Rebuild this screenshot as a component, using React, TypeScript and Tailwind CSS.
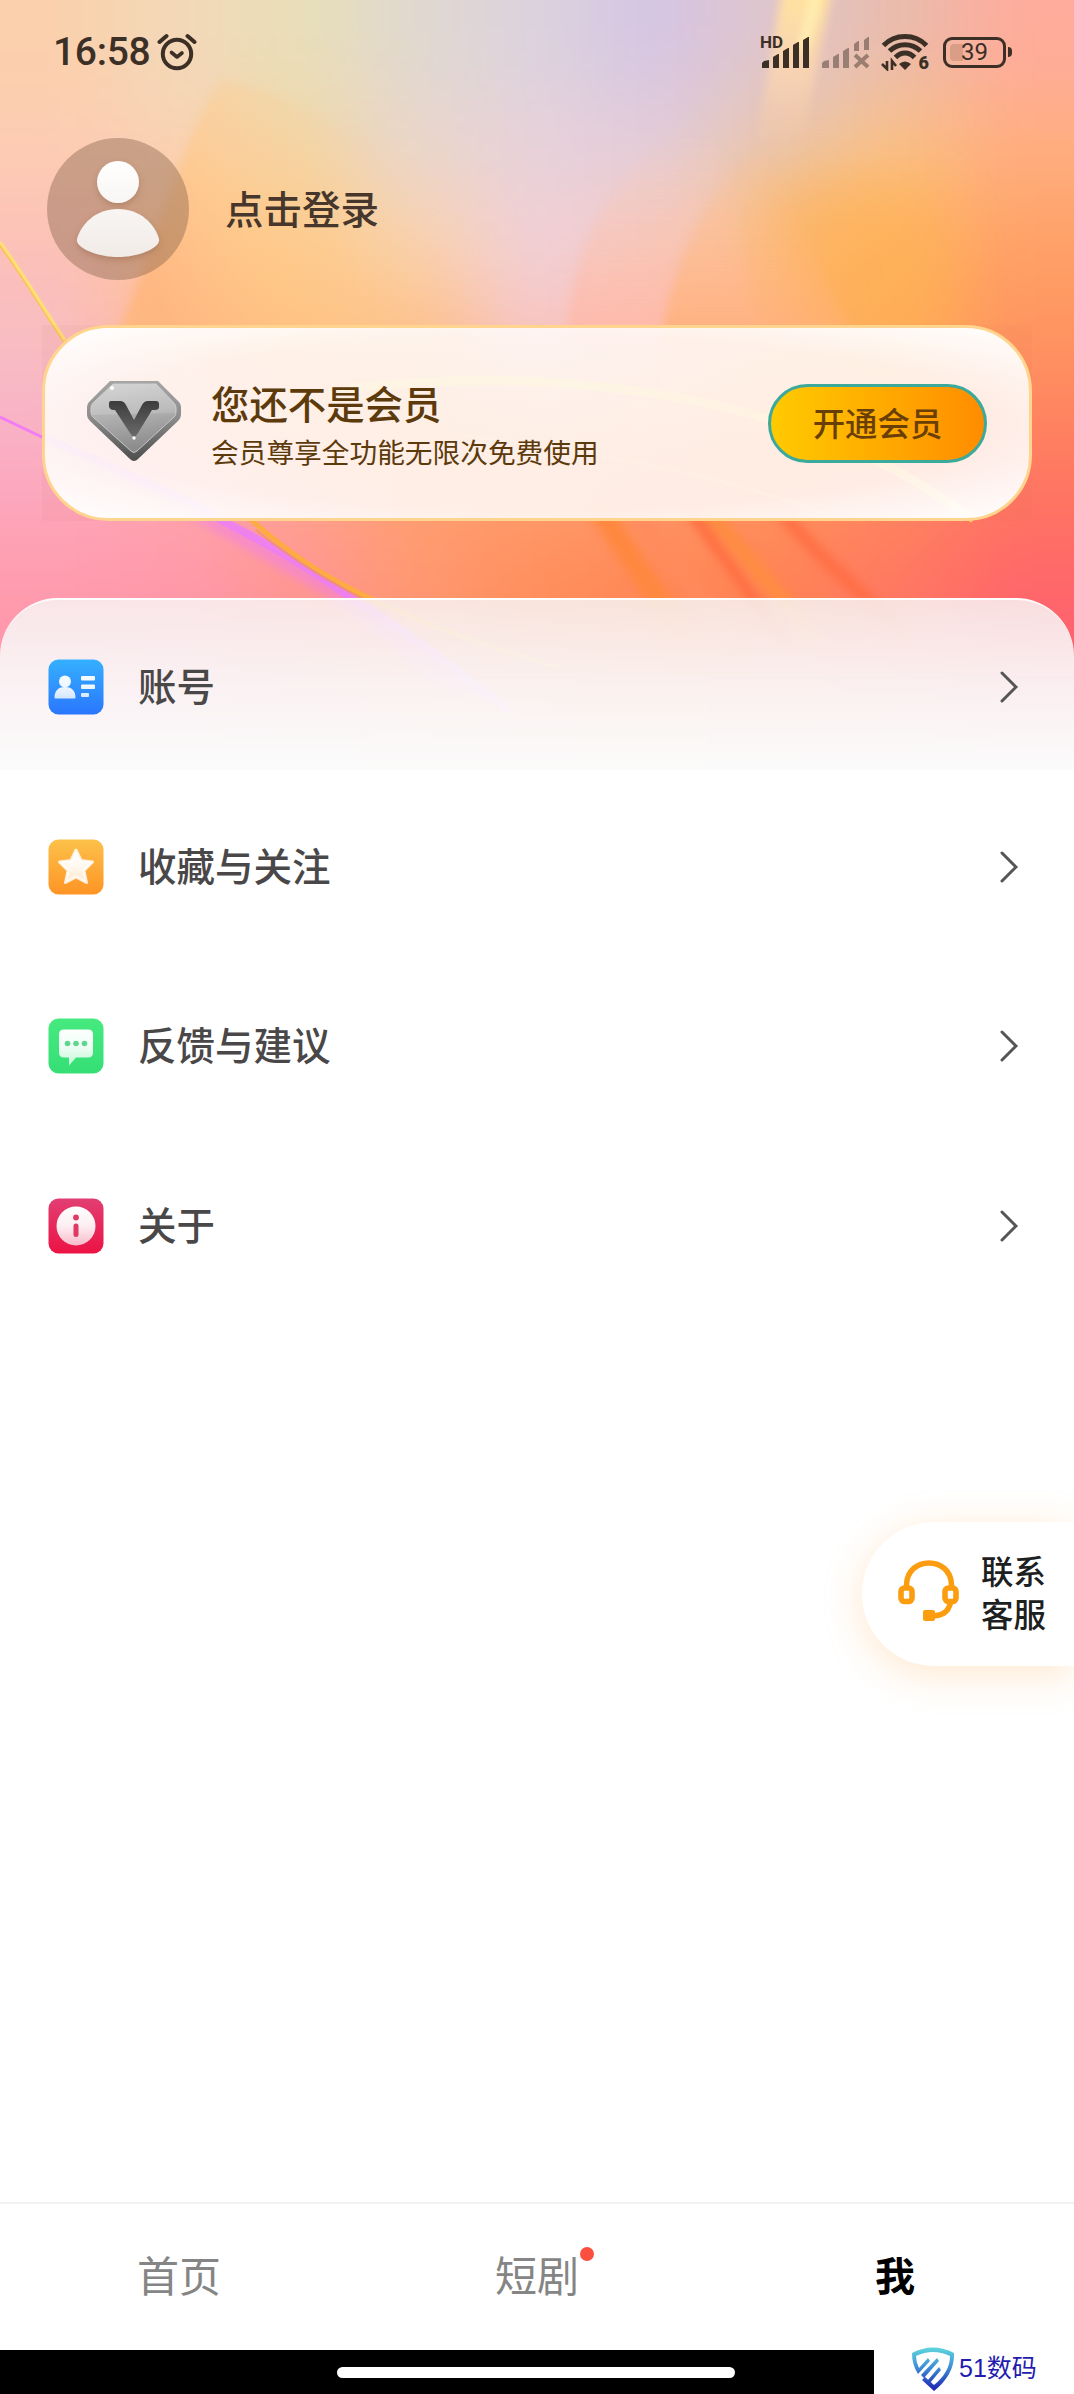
import React from 'react';

// Colours of the soft header backdrop, one entry per blurred tile
const wash = [
  ['#fbd0ac', '#f3d8b8', '#e8dfb8', '#e0d8d0', '#dcd2de', '#d5c5e3', '#e0c6cc', '#e9bcac', '#ffac9c'],
  ['#fdccb4', '#fad2b4', '#f3d6a6', '#ead6cc', '#e8d1da', '#e4cdd9', '#eac6ab', '#fbc184', '#ffae7e'],
  ['#fcc0b8', '#ffc698', '#ffcb8a', '#fbd2ac', '#f1cfd8', '#f8cabf', '#fbbc7c', '#feb45a', '#ffa066'],
  ['#f7bdc4', '#ffb690', '#ffb678', '#ffbb84', '#f8c4c4', '#ffbba0', '#ffb070', '#ffa656', '#ff9260'],
  ['#faaec6', '#ffaaa8', '#ffa888', '#ffa270', '#ffa474', '#ff9c70', '#ff9660', '#ff9060', '#ff7c60'],
  ['#ff9fb2', '#ff9cae', '#ff9a94', '#ff9a70', '#ff9260', '#ff8c5c', '#ff8858', '#ff7c60', '#ff6c66'],
  ['#ff96a8', '#ff94a4', '#ff9090', '#ff9470', '#ff8a58', '#ff8250', '#ff7c50', '#ff7464', '#ff6070'],
];

const Backdrop: React.FC = () => (
  <svg className="absolute inset-x-0 top-0" width="1074" height="770" viewBox="0 0 1074 770">
    <defs>
      <filter id="soft" x="-20%" y="-20%" width="140%" height="140%" colorInterpolationFilters="sRGB">
        <feGaussianBlur stdDeviation="44" />
      </filter>
      <filter id="blur30" x="-50%" y="-50%" width="200%" height="200%" colorInterpolationFilters="sRGB">
        <feGaussianBlur stdDeviation="30" />
      </filter>
      <filter id="blur5" x="-50%" y="-50%" width="200%" height="200%" colorInterpolationFilters="sRGB">
        <feGaussianBlur stdDeviation="5" />
      </filter>
      <linearGradient id="leftPetal" x1="150" y1="280" x2="380" y2="150" gradientUnits="userSpaceOnUse">
        <stop offset="0" stopColor="#ffb67c" stopOpacity="0.85" />
        <stop offset="0.4" stopColor="#ffc886" stopOpacity="0.6" />
        <stop offset="1" stopColor="#f8d39e" stopOpacity="0" />
      </linearGradient>
      <linearGradient id="midPetal" x1="0" y1="130" x2="0" y2="340" gradientUnits="userSpaceOnUse">
        <stop offset="0" stopColor="#f3cdb8" stopOpacity="0" />
        <stop offset="1" stopColor="#ffb8aa" stopOpacity="0.95" />
      </linearGradient>
      <linearGradient id="midPetal2" x1="0" y1="140" x2="0" y2="340" gradientUnits="userSpaceOnUse">
        <stop offset="0" stopColor="#fcc690" stopOpacity="0" />
        <stop offset="1" stopColor="#ffb07e" />
      </linearGradient>
      <linearGradient id="streak" x1="0" y1="0" x2="0" y2="150" gradientUnits="userSpaceOnUse">
        <stop offset="0" stopColor="#ffe0a0" />
        <stop offset="0.5" stopColor="#ffd8ae" stopOpacity="0.7" />
        <stop offset="1" stopColor="#ffcf9e" stopOpacity="0" />
      </linearGradient>
    </defs>

    <rect width="1074" height="770" fill="#ffb898" />
    <g filter="url(#soft)">
      {wash.map((row, r) =>
        row.map((color, c) => {
          const left = c === 0 ? -140 : c * 119.4;
          const right = c === 8 ? 1220 : (c + 1) * 119.4 + 1;
          const top = r === 0 ? -140 : r * 100;
          const bottom = r === 6 ? 900 : (r + 1) * 100 + 1;
          return <rect key={`${r}-${c}`} x={left} y={top} width={right - left} height={bottom - top} fill={color} />;
        })
      )}
    </g>

    <path d="M222 80 C185 130 165 220 112 350 L500 350 L420 200 C360 130 290 90 222 80Z" fill="url(#leftPetal)" filter="url(#blur5)" />
    <path d="M566 350 C570 240 620 150 720 110 L760 350Z" fill="url(#midPetal)" filter="url(#blur5)" />
    <path d="M660 350 C670 260 710 190 760 140 L860 350Z" fill="url(#midPetal2)" filter="url(#blur5)" />
    <path d="M770 180 C780 230 800 290 830 360 L960 360 L930 190Z" fill="#ffb055" opacity="0.6" filter="url(#blur30)" />
    <path d="M782 -10 L832 -10 L802 140 L757 140Z" fill="url(#streak)" filter="url(#blur5)" />
    <path d="M816 -10 C814 10 808 30 802 50" stroke="#fff0b0" strokeWidth="10" fill="none" filter="url(#blur5)" />

    {/* warm folds under the member card */}
    <g fill="none" filter="url(#blur5)">
      <path d="M600 510 L685 640" stroke="#ff8840" strokeWidth="22" />
      <path d="M632 510 L735 640" stroke="#ff8a5c" strokeWidth="20" opacity="0.7" />
      <path d="M690 510 L790 650" stroke="#ff6e42" strokeWidth="11" />
      <path d="M707 510 L816 640" stroke="#ff8c42" strokeWidth="16" />
      <path d="M780 510 C820 560 860 590 910 640" stroke="#ff6c42" strokeWidth="14" opacity="0.8" />
    </g>

    {/* light trails */}
    <path d="M44 438 C120 470 190 500 225 522 C280 545 330 580 362 602 C420 640 470 680 510 712 L430 680 L330 598 L200 522Z" fill="#f07cf0" opacity="0.55" filter="url(#blur5)" />
    <path d="M0 417 L44 438" fill="none" stroke="#f27cf4" strokeWidth="3" />
    <path d="M44 438 C120 470 190 500 225 522 C280 550 320 575 354 600 C420 640 470 680 510 712" fill="none" stroke="#ea7cff" strokeWidth="8" opacity="0.75" />
    <path d="M0 244 C25 278 42 308 65 342" fill="none" stroke="#fbc25a" strokeWidth="4" />
    <path d="M0 242 C25 276 42 306 65 340" fill="none" stroke="#ffdf78" strokeWidth="3" />
    <path d="M248 517 C290 555 330 580 378 602 C430 626 490 648 560 668" fill="none" stroke="#fdab42" strokeWidth="5" />
    <path d="M256 530 C290 558 330 583 372 603" fill="none" stroke="#f0943c" strokeWidth="2" opacity="0.6" />
    <path d="M350 388 C560 365 720 400 800 430 C880 455 930 490 974 519" fill="none" stroke="#ffe25a" strokeWidth="9" opacity="0.7" />
    <path d="M420 430 C600 450 740 480 840 519" fill="none" stroke="#ffc070" strokeWidth="3" opacity="0.5" />
  </svg>
);

const Bars: React.FC<{ crossed?: boolean }> = ({ crossed }) => (
  <svg width="48" height="32" viewBox="0 0 48 32" fill="currentColor">
    <path d="M0 31v-5l2-2 5-1v8zM11 31V20l5-3h1v14zM21 31V14l5-3h1v20z" />
    {crossed ? (
      <>
        <path d="M32 14V7l4-3h1v10zM42 13V3l4-3h1v13z" />
        <path d="M33 18 46 30M46 18 33 30" stroke="currentColor" strokeWidth="4" />
      </>
    ) : (
      <path d="M31 31V8l5-3h1v26zM41 31V3l5-3h1v31z" />
    )}
  </svg>
);

const StatusBar: React.FC = () => (
  <div className="flex h-[104px] items-center pr-[62px] pl-[53px] text-[#3b2f26]">
    <span className="font-[Roboto] text-[39px] leading-none font-medium tracking-[-0.3px]">16:58</span>
    <svg className="ml-[7px]" width="40" height="38" viewBox="0 0 40 38" fill="none" stroke="currentColor" strokeLinecap="round">
      <circle cx="20" cy="21" r="14.2" strokeWidth="4" />
      <path d="M14.500 19.500 20 24l5-4" strokeWidth="3.600" strokeLinejoin="round" />
      <path d="M2.500 9 9.500 3M37.500 9 30.500 3" strokeWidth="4" />
    </svg>
    <div className="ml-auto flex items-center">
      <div className="relative mt-[2px]">
        <span className="absolute -top-[3px] -left-[2px] font-[Roboto] text-[17px] leading-none font-bold">HD</span>
        <Bars />
      </div>
      <div className="mt-[2px] ml-[12px] opacity-45">
        <Bars crossed />
      </div>
      <div className="relative ml-[11px]">
        <svg width="48" height="38" viewBox="0 0 48 38" fill="none" stroke="currentColor">
          <path d="M2.500 12.500C14 .500 34 .500 45.500 12.500" strokeWidth="5" />
          <path d="M8.500 18C17 9.500 31 9.500 39.500 18" strokeWidth="5" />
          <path d="M14.500 24.500C20 18.500 28 18.500 33.500 24.500" strokeWidth="5" />
          <path d="M18 31q6-5 12 0l-6 6z" fill="currentColor" stroke="none" />
          <path d="M6 28v8l-5-5M11 37v-9l4 5" strokeWidth="2.600" />
        </svg>
        <span className="absolute right-0 -bottom-[1px] font-[Roboto] text-[18px] leading-none font-black">6</span>
      </div>
      <div className="relative ml-[14px] flex h-[31px] w-[63px] items-center justify-center rounded-[9px] border-[3px] border-current">
        <i className="absolute top-[4px] left-[4px] h-[17px] w-[13px] rounded-l bg-[#9c6b4b]/30" />
        <span className="relative font-[Roboto] text-[24px] leading-none">39</span>
      </div>
      <i className="ml-[2px] h-[10px] w-[4px] rounded-r bg-current" />
    </div>
  </div>
);

const Avatar: React.FC = () => (
  <svg width="142" height="142" viewBox="0 0 142 142">
    <defs>
      <linearGradient id="person" x1="0" y1="20" x2="0" y2="120" gradientUnits="userSpaceOnUse">
        <stop offset="0" stopColor="#fff" />
        <stop offset="1" stopColor="#f1ebe7" />
      </linearGradient>
      <filter id="personShadow" x="-20%" y="-20%" width="140%" height="140%">
        <feDropShadow dx="0" dy="3" stdDeviation="3" floodColor="#7a4a30" floodOpacity="0.3" />
      </filter>
    </defs>
    <circle cx="71" cy="71" r="71" fill="#8b6650" opacity="0.44" />
    <g fill="url(#person)" filter="url(#personShadow)">
      <circle cx="71" cy="44" r="21" />
      <path d="M71 71C93 71 108 86 112 101C114 109 93 119 71 119S28 109 30 101C34 86 49 71 71 71Z" />
    </g>
  </svg>
);

const Diamond: React.FC = () => (
  <svg className="-mt-[4px]" width="94" height="82" viewBox="0 0 94 82">
    <defs>
      <linearGradient id="rim" x1="0" y1="0" x2="0" y2="1">
        <stop offset="0" stopColor="#a5a5a5" />
        <stop offset="0.45" stopColor="#8d8d8d" />
        <stop offset="1" stopColor="#4d4d4d" />
      </linearGradient>
      <linearGradient id="face" x1="0" y1="0" x2="0.2" y2="1">
        <stop offset="0" stopColor="#d6d6d6" />
        <stop offset="0.5" stopColor="#bdbdbd" />
        <stop offset="1" stopColor="#8f8f8f" />
      </linearGradient>
      <linearGradient id="vee" x1="0" y1="0" x2="0" y2="1">
        <stop offset="0" stopColor="#3c3c3c" />
        <stop offset="1" stopColor="#6a6a6a" />
      </linearGradient>
    </defs>
    <path d="M23 1H71L92 22Q94 24 94 27V35Q94 38 91 41L51 79Q47 83 43 79L3 41Q0 38 0 35V27Q0 24 2 22Z" fill="url(#rim)" />
    <path d="M26 4H69L87 23Q89 25 89 28V32Q89 35 87 37L50 71Q47 74 44 71L6 37Q4 35 4 32V28Q4 25 6 23Z" fill="url(#face)" stroke="#cfcfcf" strokeWidth="1" />
    <path d="M4 35 89 33 87 37 50 71Q47 74 44 71L6 37Z" fill="#808080" opacity="0.2" />
    <path d="M24 21H33Q37 21 39 25L47 40L55 25Q57 21 61 21H69Q72 21 72 24V27Q72 30 68 30H65L51 53Q47 60 43 53L28 30H26Q22 29 22 26V23Q22 21 24 21Z" fill="url(#vee)" />
    <circle cx="25" cy="8" r="2" fill="#fff" />
    <circle cx="47" cy="58" r="1.700" fill="#fff" />
  </svg>
);

const MemberCard: React.FC = () => (
  <div className="mx-[42px] mt-[45px] bg-[#c66a50]/5">
    <div className="flex h-[196px] items-center rounded-[66px] border-[3px] border-[#ffd48e] bg-[radial-gradient(ellipse_at_center,rgba(255,250,246,0.87)_30%,rgba(255,250,247,0.88)_65%,rgba(255,255,255,1)_100%)] pr-[42px] pl-[42px]">
      <Diamond />
      <div className="ml-[30px] text-[#5d3a0c]">
        <div className="text-[38.400px] leading-[55px] font-medium">您还不是会员</div>
        <div className="text-[27.700px] leading-[42px]">会员尊享全功能无限次免费使用</div>
      </div>
      <button className="ml-auto h-[79px] w-[219px] rounded-full border-[3px] border-[#3ba99c] bg-gradient-to-r from-[#ffca00] to-[#ff8c00] pb-[2px] text-[32.400px] leading-none font-medium text-[#693f06]">
        开通会员
      </button>
    </div>
  </div>
);

const Tile: React.FC<{ id: string; from: string; to: string; children: React.ReactNode }> = ({ id, from, to, children }) => (
  <svg width="56" height="56" viewBox="0 0 56 56">
    <defs>
      <linearGradient id={id} x1="0" y1="0" x2="0" y2="1">
        <stop offset="0" stopColor={from} />
        <stop offset="1" stopColor={to} />
      </linearGradient>
      <linearGradient id={`${id}Glyph`} x1="0" y1="8" x2="0" y2="48" gradientUnits="userSpaceOnUse">
        <stop offset="0" stopColor="#fff" />
        <stop offset="0.5" stopColor="#fff" stopOpacity="0.92" />
        <stop offset="1" stopColor="#fff" stopOpacity="0.7" />
      </linearGradient>
    </defs>
    <rect x="0.500" y="0.500" width="55" height="55" rx="10" fill={`url(#${id})`} />
    <g fill={`url(#${id}Glyph)`}>{children}</g>
  </svg>
);

const items = [
  {
    label: '账号',
    icon: (
      <Tile id="account" from="#35b0ff" to="#2a76fd">
        <circle cx="17" cy="22.500" r="6" />
        <path d="M6.500 38.500C6.500 31 11 28 17 28S27.500 31 27.500 38.500Q27.500 39.500 26.500 39.500H7.500Q6.500 39.500 6.500 38.500Z" />
        <rect x="33" y="17" width="14" height="4.500" rx="1" />
        <rect x="33" y="25.500" width="14" height="4.500" rx="1" />
        <rect x="33" y="34" width="8" height="4" rx="1" />
      </Tile>
    ),
  },
  {
    label: '收藏与关注',
    icon: (
      <Tile id="favorite" from="#fcc14a" to="#fe9425">
        <path
          d="M28 11 33 21.500 44.500 23 36 31.500 38.500 43.500 28 38 17.500 43.500 20 31.500 11.500 23 23 21.500Z"
          stroke="#fff"
          strokeOpacity="0.800"
          strokeWidth="3"
          strokeLinejoin="round"
        />
      </Tile>
    ),
  },
  {
    label: '反馈与建议',
    icon: (
      <Tile id="feedback" from="#46ea7f" to="#35df76">
        <path d="M16 11.500H40Q45 11.500 45 16.500V34.500Q45 39.500 40 39.500H28L21 47.500V39.500H16Q11 39.500 11 34.500V16.500Q11 11.500 16 11.500Z" />
        <g fill="#5fd68f">
          <circle cx="19.500" cy="25.500" r="2.800" />
          <circle cx="28" cy="25.500" r="2.800" />
          <circle cx="36.500" cy="25.500" r="2.800" />
        </g>
      </Tile>
    ),
  },
  {
    label: '关于',
    icon: (
      <Tile id="about" from="#e23e73" to="#ec1344">
        <circle cx="28" cy="28" r="19.500" />
        <g fill="#e03a64">
          <circle cx="28" cy="19.500" r="2.900" />
          <rect x="25.500" y="25.500" width="5" height="13.500" rx="2.500" />
        </g>
      </Tile>
    ),
  },
];

const Menu: React.FC = () => (
  <div className="mt-[77px] flex-1 rounded-t-[58px] border-t-2 border-white/80 bg-[linear-gradient(180deg,rgba(248,243,243,0.85)_0,rgba(250,247,248,0.94)_85px,rgba(251,251,251,1)_169px,#fff_170px)]">
    <div className="-mt-[3px]">
      {items.map((item) => (
        <div key={item.label} className="flex h-[179.700px] items-center pr-[55px] pl-[48px] text-[#4a4748]">
          {item.icon}
          <span className="-mt-[5px] ml-[34px] text-[38.500px] leading-none font-medium">{item.label}</span>
          <svg className="ml-auto" width="20" height="32" viewBox="0 0 20 32" fill="none" stroke="#555" strokeWidth="3" strokeLinecap="round">
            <path d="M3 2 17 16 3 30" />
          </svg>
        </div>
      ))}
    </div>
  </div>
);

const SupportButton: React.FC = () => (
  <div className="absolute top-[1522px] right-0 flex h-[144px] w-[212px] items-center rounded-l-full bg-white pb-[7px] pl-[36px] shadow-[0_8px_40px_rgba(255,160,50,0.24)]">
    <svg width="62" height="62" viewBox="0 0 62 62" fill="none" stroke="#fb9d0e">
      <path d="M8.500 28V25C9 -4.500 53 -4.500 53.500 25V28" strokeWidth="5.500" />
      <rect x="3" y="28" width="11" height="13.500" rx="3.500" strokeWidth="5.600" />
      <rect x="47" y="28" width="11" height="13.500" rx="3.500" strokeWidth="5.600" />
      <path d="M52.500 43C50 52 45 56 32 56" strokeWidth="5.500" />
      <rect x="25" y="50" width="12" height="11" rx="2" fill="#fb9d0e" stroke="none" />
    </svg>
    <span className="ml-[21px] w-[66px] text-[32.500px] leading-[43px] font-medium text-[#1c2020]">联系客服</span>
  </div>
);

const TabBar: React.FC = () => (
  <div className="grid h-[148px] grid-cols-3 items-center border-t-2 border-[#f1f1f1] bg-white pb-[7px] text-center text-[42px] leading-none text-[#858585]">
    <span>首页</span>
    <span>
      <span className="relative">
        短剧
        <i className="absolute top-[4px] -right-[15px] size-[14px] rounded-full bg-[#fb4f3f]" />
      </span>
    </span>
    <span className="text-[40px] font-bold text-black">我</span>
  </div>
);

const Watermark: React.FC = () => (
  <div className="flex w-[200px] items-center bg-white pl-[38px]">
    <svg className="-mt-[5px]" width="43" height="45" viewBox="0 0 43 45" fill="none">
      <defs>
        <linearGradient id="shield" x1="0" y1="0" x2="0" y2="1">
          <stop offset="0" stopColor="#5fd6dc" />
          <stop offset="0.450" stopColor="#3f8fd8" />
          <stop offset="1" stopColor="#1a1fb0" />
        </linearGradient>
      </defs>
      <path
        fill="url(#shield)"
        d="M0 6Q21-5 42 6Q43 27 22 44L10 33L13 30L22 38Q38 25 38 9Q21 1 4 9Q4 15 7 21L16 11L18 14L6 27Q0 18 0 6ZM9 28 25 11 27 14 12 31ZM16 33 27 20 29 23 18 36Z"
      />
    </svg>
    <span className="-mt-[8px] ml-[4px] font-['Liberation_Sans','Noto_Sans_CJK_SC',sans-serif] text-[25px] leading-none text-[#241cae]">51数码</span>
  </div>
);

const App: React.FC = () => {
  return (
    <div className="relative h-[2394px] w-[1074px] overflow-hidden bg-white font-['Noto_Sans_CJK_SC',sans-serif]">
      <Backdrop />
      <div className="relative flex h-full flex-col">
        <StatusBar />
        <div className="mt-[34px] flex items-center pl-[47px]">
          <Avatar />
          <span className="-mt-[4px] ml-[36px] text-[38.500px] leading-none font-medium text-[#46362b]">点击登录</span>
        </div>
        <MemberCard />
        <Menu />
        <TabBar />
        <div className="flex h-[44px] bg-black">
          <div className="flex flex-1 items-center pl-[337px]">
            <div className="h-[11px] w-[398px] rounded-full bg-white" />
          </div>
          <Watermark />
        </div>
      </div>
      <SupportButton />
    </div>
  );
};

export default App;
